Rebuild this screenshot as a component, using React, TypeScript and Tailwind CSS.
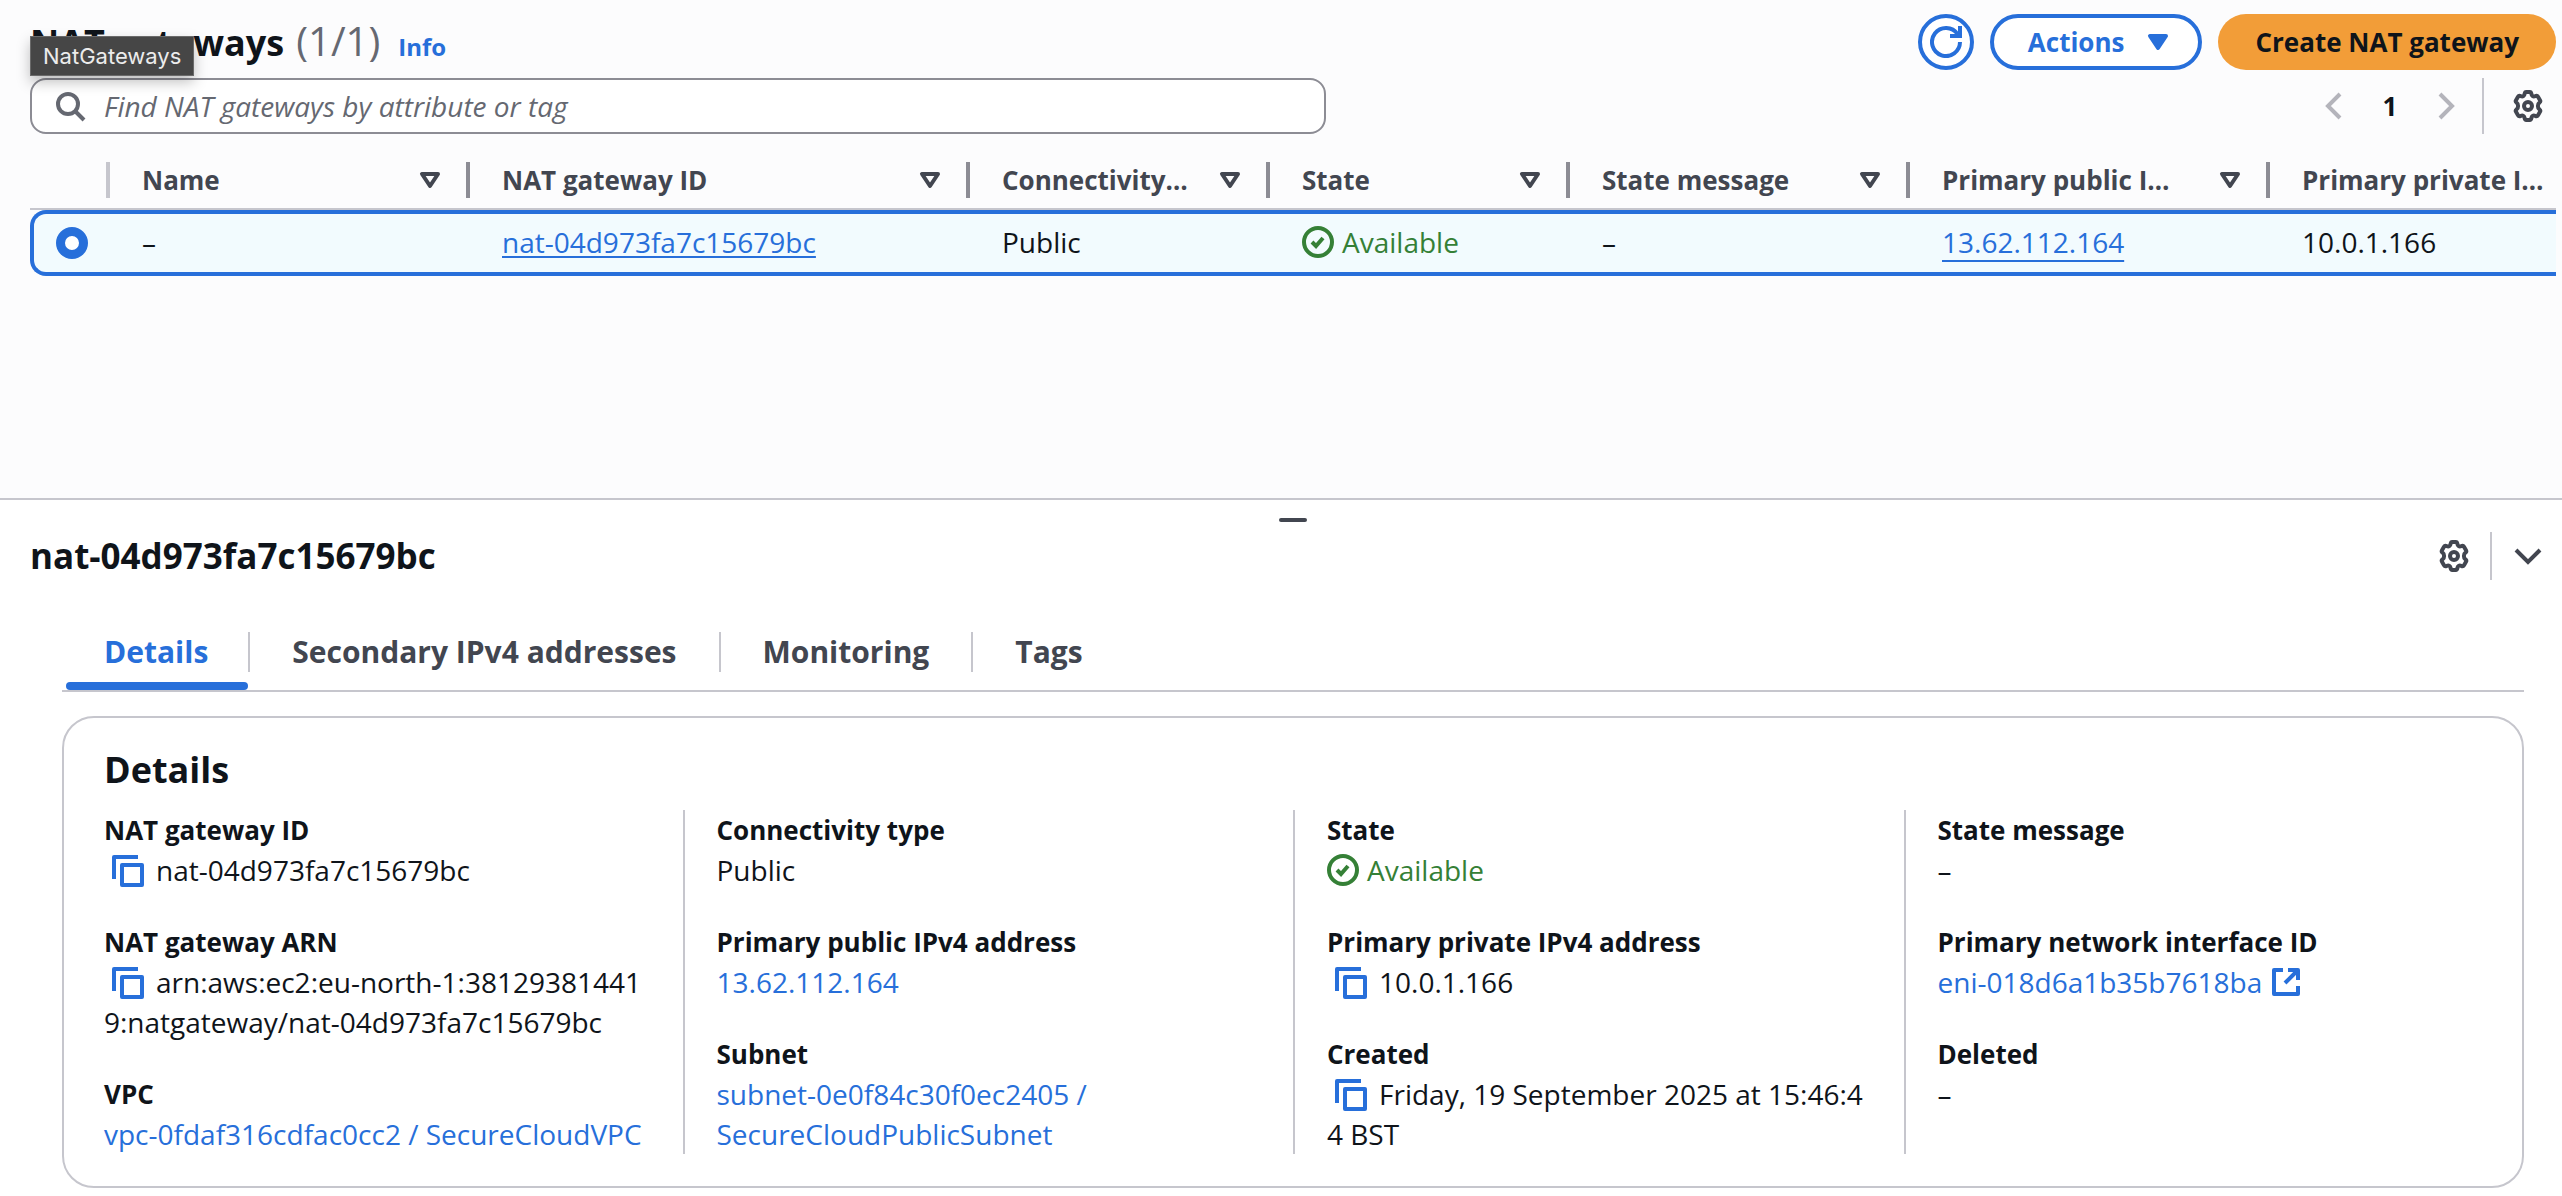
import type { ReactNode } from "react";

type IconProps = { className?: string; children: ReactNode };

function Icon({ className = "", children }: IconProps) {
  return (
    <svg
      viewBox="0 0 16 16"
      aria-hidden="true"
      className={`size-8 shrink-0 fill-none stroke-current stroke-2 ${className}`}
    >
      {children}
    </svg>
  );
}

const GearIcon = () => (
  <Icon>
    <path
      strokeLinejoin="round"
      d="M7.1 1H8.9C9.4 1 9.6 1.4 9.7 1.9C9.8 3 10.6 3.5 11.6 3.1C12.3 2.8 12.7 2.9 13 3.4L14 5.1C14.3 5.6 14.1 6 13.7 6.3C12.7 7 12.7 9 13.7 9.7C14.1 10 14.3 10.4 14 10.9L13 12.6C12.7 13.1 12.3 13.2 11.6 12.9C10.6 12.5 9.8 13 9.7 14.1C9.6 14.6 9.4 15 8.9 15H7.1C6.6 15 6.4 14.6 6.3 14.1C6.2 13 5.4 12.5 4.4 12.9C3.7 13.2 3.3 13.1 3 12.6L2 10.9C1.7 10.4 1.9 10 2.3 9.7C3.3 9 3.3 7 2.3 6.3C1.9 6 1.7 5.6 2 5.1L3 3.4C3.3 2.9 3.7 2.8 4.4 3.1C5.4 3.5 6.2 3 6.3 1.9C6.4 1.4 6.6 1 7.1 1Z"
    />
    <circle cx="8" cy="8" r="2" />
  </Icon>
);

const CopyButton = ({ label }: { label: string }) => (
  <button type="button" aria-label={label} className="mr-3 ml-2 inline-block align-middle text-[#276fda]">
    <Icon className="-mt-1.5 block">
      <path strokeLinejoin="round" d="M1 12V1h12" />
      <path strokeLinejoin="round" d="M5 5h10v10H5z" />
    </Icon>
  </button>
);

const Available = () => (
  <span className="flex items-center gap-2 text-[#358036]">
    <Icon>
      <circle cx="8" cy="8" r="7" />
      <path d="m5 8 2 2 3.5-4" />
    </Icon>
    Available
  </span>
);

const columns = [
  { label: "Name", width: "w-[360px]", gap: "pr-[22px]" },
  { label: "NAT gateway ID", width: "w-[500px]", gap: "pr-[22px]" },
  { label: "Connectivity type", width: "w-[300px]", gap: "pr-[22px]" },
  { label: "State", width: "w-[300px]", gap: "pr-[22px]" },
  { label: "State message", width: "w-[340px]", gap: "pr-[22px]" },
  { label: "Primary public IPv4 address", width: "w-[360px]", gap: "pr-8" },
];

function ResourceTable() {
  return (
    <div className="mt-1 overflow-hidden">
      <table className="w-full table-fixed border-separate border-spacing-0 text-left">
        <thead>
          <tr className="h-[72px] text-[26px] text-[#424650] [&>th]:border-b-2 [&>th]:border-[#c6c6cd] [&>th]:px-0 [&>th]:pt-3.5 [&>th]:pb-0">
            <th className="w-20">
              <div className="ml-auto h-9 w-1 bg-[#c6c6cd]" />
            </th>
            {columns.map((c) => (
              <th key={c.label} scope="col" className={c.width}>
                <div className="flex items-center pl-8">
                  <span className={`min-w-0 flex-1 truncate ${c.gap}`}>{c.label}</span>
                  <button type="button" aria-label={`Sort by ${c.label}`} className="mr-5">
                    <Icon>
                      <path strokeLinejoin="round" d="M4 5h8l-4 6z" />
                    </Icon>
                  </button>
                  <div className="h-9 w-1 shrink-0 bg-[#8c8c94]" />
                </div>
              </th>
            ))}
            <th scope="col">
              <div className="truncate pr-1 pl-8">Primary private IPv4 address</div>
            </th>
          </tr>
        </thead>
        <tbody>
          <tr className="h-[66px] [&>td]:border-y-4 [&>td]:border-[#276fda] [&>td]:bg-[#f2fbfe] [&>td]:pt-0 [&>td]:pr-0 [&>td]:pb-0.5 [&>td]:pl-8">
            <td className="rounded-l-2xl border-l-4 !pb-0 !pl-[22px]">
              <input
                type="radio"
                defaultChecked
                aria-label="Select nat-04d973fa7c15679bc"
                className="block size-8 appearance-none rounded-full border-[9px] border-[#276fda] bg-white"
              />
            </td>
            <td>–</td>
            <td>
              <a href="#nat" className="text-[#276fda] underline decoration-2 underline-offset-[3px]">
                nat-04d973fa7c15679bc
              </a>
            </td>
            <td>Public</td>
            <td>
              <Available />
            </td>
            <td>–</td>
            <td>
              <a href="#ip" className="text-[#276fda] underline decoration-2 underline-offset-[7px]">
                13.62.112.164
              </a>
            </td>
            <td>10.0.1.166</td>
          </tr>
        </tbody>
      </table>
    </div>
  );
}

function Field({ label, children }: { label: string; children: ReactNode }) {
  return (
    <div>
      <dt className="text-[26px] font-bold">{label}</dt>
      <dd className="break-words">{children}</dd>
    </div>
  );
}

function FieldColumn({ children }: { children: ReactNode }) {
  return (
    <dl className="flex flex-col gap-8 border-l-2 border-[#c6c6cd] px-8 first:border-l-0">{children}</dl>
  );
}

const Link = ({ children }: { children: ReactNode }) => (
  <a href="#resource" className="text-[#276fda]">
    {children}
  </a>
);

const tabs = ["Details", "Secondary IPv4 addresses", "Monitoring", "Tags"];

function SplitPanel() {
  return (
    <section className="border-t-2 border-[#c6c6cd] bg-white pr-1.5 pb-2 pl-[30px]">
      <div className="flex h-[22px] items-end justify-center">
        <button type="button" aria-label="Resize panel" className="h-1 w-7 rounded-sm bg-[#424650]" />
      </div>
      <header className="mt-2.5 flex h-12 items-center text-[#424650]">
        <h2 className="flex-1 text-[35px] font-bold text-[#0f141a]">nat-04d973fa7c15679bc</h2>
        <button type="button" aria-label="Panel preferences" className="mr-5">
          <GearIcon />
        </button>
        <div className="h-12 w-0.5 bg-[#c6c6cd]" />
        <button type="button" aria-label="Close panel" className="mr-3 ml-5">
          <Icon>
            <path d="m2 5 6 6 6-6" />
          </Icon>
        </button>
      </header>

      <div className="mx-8">
        <div role="tablist" className="mt-10 flex h-[72px] border-b-2 border-[#c6c6cd] pl-1">
          {tabs.map((t, i) => (
            <div key={t} className="group flex items-start">
              <button
                type="button"
                role="tab"
                aria-selected={i === 0}
                className={
                  i === 0
                    ? "relative flex h-[70px] items-start pt-3 pr-10 pl-[38px] text-[30px] font-bold text-[#276fda]"
                    : "flex h-[70px] items-start px-[42px] pt-3 text-[30px] font-bold text-[#424650]"
                }
              >
                {t}
                {i === 0 && <span className="absolute inset-x-0 bottom-0 h-2 rounded bg-[#276fda]" />}
              </button>
              <span className="mt-3 h-10 w-0.5 bg-[#c6c6cd] group-last:hidden" />
            </div>
          ))}
        </div>

        <div className="mt-6 rounded-[32px] border-2 border-[#c6c6cd] px-2 pt-7 pb-8">
          <h3 className="px-8 text-[36px] leading-[48px] font-bold">Details</h3>
          <div className="mt-4 grid grid-cols-4">
            <FieldColumn>
              <Field label="NAT gateway ID">
                <CopyButton label="Copy NAT gateway ID" />
                nat-04d973fa7c15679bc
              </Field>
              <Field label="NAT gateway ARN">
                <span className="break-all">
                  <CopyButton label="Copy NAT gateway ARN" />
                  arn:aws:ec2:eu-north-1:381293814419:natgateway/nat-04d973fa7c15679bc
                </span>
              </Field>
              <Field label="VPC">
                <Link>vpc-0fdaf316cdfac0cc2 / SecureCloudVPC</Link>
              </Field>
            </FieldColumn>
            <FieldColumn>
              <Field label="Connectivity type">Public</Field>
              <Field label="Primary public IPv4 address">
                <Link>13.62.112.164</Link>
              </Field>
              <Field label="Subnet">
                <Link>subnet-0e0f84c30f0ec2405 / SecureCloudPublicSubnet</Link>
              </Field>
            </FieldColumn>
            <FieldColumn>
              <Field label="State">
                <Available />
              </Field>
              <Field label="Primary private IPv4 address">
                <CopyButton label="Copy private IPv4 address" />
                10.0.1.166
              </Field>
              <Field label="Created">
                <span className="break-all">
                  <CopyButton label="Copy creation time" />
                  Friday, 19 September 2025 at 15:46:44 BST
                </span>
              </Field>
            </FieldColumn>
            <FieldColumn>
              <Field label="State message">–</Field>
              <Field label="Primary network interface ID">
                <a href="#eni" className="flex items-center gap-2 text-[#276fda]">
                  eni-018d6a1b35b7618ba
                  <Icon>
                    <path strokeLinejoin="round" d="M6.5 2H2v12h12V10M9 2h5v5M14 2 7.5 8.5" />
                  </Icon>
                </a>
              </Field>
              <Field label="Deleted">–</Field>
            </FieldColumn>
          </div>
        </div>
      </div>
    </section>
  );
}

export default function App() {
  return (
    <div className="flex min-h-screen flex-col bg-[#fcfcfd] font-['Open_Sans','Noto_Sans',sans-serif] text-[28px] leading-10 font-[450] text-[#0f141a]">
      <main className="flex-1 pt-3.5 pr-1.5 pb-20 pl-[30px]">
        <header className="flex h-14 items-center gap-4">
          <div className="relative flex flex-1 items-baseline">
            <h1 className="text-[36px] font-bold">NAT gateways</h1>
            <span className="ml-3 text-[40px] text-[#656871]">(1/1)</span>
            <a href="#info" className="ml-[18px] text-2xl font-bold text-[#276fda]">
              Info
            </a>
            <div
              role="tooltip"
              className="absolute top-[15px] left-0 border border-[#6a6a6a] bg-[#464646] px-3 font-['Inter',sans-serif] text-[22px] leading-[38px] font-normal text-[#ececec] shadow-[0_6px_14px_rgba(0,0,0,0.25)]"
            >
              NatGateways
            </div>
          </div>
          <button
            type="button"
            aria-label="Refresh"
            className="flex size-14 items-center justify-center rounded-full border-4 border-[#276fda] bg-white text-[#276fda]"
          >
            <Icon>
              <path d="M15 8a7 7 0 1 1-1.2-3.9M15 0v5h-5" />
            </Icon>
          </button>
          <button
            type="button"
            className="flex h-14 items-center gap-[18px] rounded-full border-4 border-[#276fda] bg-white pr-6 pl-[34px] text-[26px] font-bold text-[#276fda]"
          >
            Actions
            <Icon>
              <path strokeLinejoin="round" d="M4 5h8l-4 6z" fill="currentColor" />
            </Icon>
          </button>
          <button type="button" className="h-14 rounded-full bg-[#f29d38] px-[37px] text-[26px] font-bold">
            Create NAT gateway
          </button>
        </header>

        <div className="mt-2 flex h-14 items-center text-[#424650]">
          <label className="flex h-14 w-[1296px] items-center gap-[18px] rounded-2xl border-2 border-[#8c8c94] bg-white pr-4 pl-[22px] text-[#656871]">
            <Icon>
              <circle cx="7" cy="7" r="5" />
              <path d="m15 15-4.5-4.5" />
            </Icon>
            <input
              type="text"
              aria-label="Find NAT gateways"
              placeholder="Find NAT gateways by attribute or tag"
              className="min-w-0 flex-1 bg-transparent italic outline-none placeholder:text-[#656871]"
            />
          </label>
          <nav aria-label="Pagination" className="ml-auto flex items-center gap-6">
            <button type="button" aria-label="Previous page" className="text-[#b4b4bb]">
              <Icon>
                <path d="M11 2 5 8l6 6" />
              </Icon>
            </button>
            <button type="button" className="w-8 text-[26px] font-bold text-[#0f141a]">
              1
            </button>
            <button type="button" aria-label="Next page" className="text-[#b4b4bb]">
              <Icon>
                <path d="m5 2 6 6-6 6" />
              </Icon>
            </button>
          </nav>
          <div className="ml-5 h-14 w-0.5 bg-[#c6c6cd]" />
          <button type="button" aria-label="Preferences" className="mr-3 ml-7">
            <GearIcon />
          </button>
        </div>

        <ResourceTable />
      </main>
      <SplitPanel />
    </div>
  );
}
